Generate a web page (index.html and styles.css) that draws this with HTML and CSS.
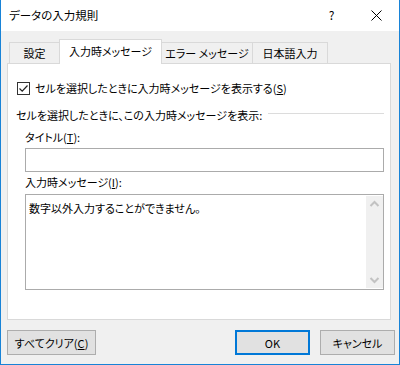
FILE: index.html
```html
<!DOCTYPE html>
<html lang="ja">
<head>
<meta charset="utf-8">
<title>データの入力規則</title>
<link rel="stylesheet" href="styles.css">
</head>
<body>
<div class="window">
  <div class="titlebar">
    <div class="title">データの入力規則</div>
    <div class="tb-btn help">?</div>
    <div class="tb-btn close">
      <svg width="11" height="11" viewBox="0 0 11 11"><path d="M0.5 0.5 L10.5 10.5 M10.5 0.5 L0.5 10.5" stroke="#000" stroke-width="1" fill="none"/></svg>
    </div>
  </div>
  <div class="body">
    <div class="tabs">
      <div class="tab t1">設定</div>
      <div class="tab active t2">入力時メッセージ</div>
      <div class="tab t3">エラー メッセージ</div>
      <div class="tab t4">日本語入力</div>
    </div>
    <div class="panel">
      <div class="check-row">
        <span class="checkbox">
          <svg width="11" height="11" viewBox="0 0 11 11"><path d="M1.5 5.5 L4.2 8.2 L9.5 2.5" stroke="#222" stroke-width="1.2" fill="none"/></svg>
        </span>
        <span>セルを選択したときに入力時メッセージを表示する(<u>S</u>)</span>
      </div>
      <div class="section-row">
        <span>セルを選択したときに、この入力時メッセージを表示:</span>
        <span class="sep"></span>
      </div>
      <div class="indent">
        <div class="label l1">タイトル(<u>T</u>):</div>
        <div class="input"></div>
        <div class="label l2">入力時メッセージ(<u>I</u>):</div>
        <div class="textarea">
          <div class="ta-text">数字以外入力することができません。</div>
          <div class="scrollbar">
            <svg width="17" height="17" viewBox="0 0 17 17"><path d="M4.5 10 L8.5 6 L12.5 10" stroke="#c2c2c2" stroke-width="2" fill="none"/></svg>
            <svg width="17" height="17" viewBox="0 0 17 17"><path d="M4.5 7 L8.5 11 L12.5 7" stroke="#c2c2c2" stroke-width="2" fill="none"/></svg>
          </div>
        </div>
      </div>
    </div>
    <div class="buttons">
      <div class="btn clear">すべてクリア(<u>C</u>)</div>
      <div class="spacer"></div>
      <div class="btn ok">OK</div>
      <div class="btn cancel">キャンセル</div>
    </div>
  </div>
</div>
</body>
</html>
```
FILE: styles.css
```css
html, body {
  margin: 0;
  padding: 0;
  background: #ffffff;
}
body {
  font-family: "Noto Sans CJK JP", "Noto Sans", sans-serif;
  font-size: 11px;
  font-feature-settings: "palt" 1;
  color: #000;
  line-height: 16px;
}
.window {
  width: 398px;
  height: 364px;
  border-left: 1px solid #1883d7;
  border-right: 1px solid #1883d7;
  border-bottom: 1px solid #1883d7;
  background: #f0f0f0;
  display: flex;
  flex-direction: column;
}
.titlebar {
  height: 31px;
  background: #ffffff;
  display: flex;
  align-items: center;
}
.title {
  flex: 1;
  padding-left: 8px;
  padding-bottom: 1px;
  font-size: 11.5px;
}
.tb-btn {
  width: 45px;
  height: 31px;
  display: flex;
  align-items: center;
  justify-content: center;
}
.help {
  font-size: 12px;
  padding-bottom: 1px;
  box-sizing: border-box;
}
.close svg { display: block; }

.body {
  padding: 8px 6px 0 6px;
  display: flex;
  flex-direction: column;
}
.tabs {
  display: flex;
  align-items: flex-end;
  height: 24px;
  padding-left: 2px;
}
.tab {
  box-sizing: border-box;
  height: 21px;
  border: 1px solid #d9d9d9;
  border-bottom: none;
  background: #f0f0f0;
  display: flex;
  align-items: center;
  justify-content: center;
  white-space: nowrap;
}
.t1 { width: 51px; }
.t2 { width: 103px; margin-left: -1px; }
.t3 { width: 92px; margin-left: -1px; }
.t4 { width: 76px; margin-left: -1px; }
.tab.active {
  height: 25px;
  margin-bottom: -1px;
  background: #ffffff;
  position: relative;
  z-index: 1;
  padding-bottom: 2px;
}
.panel {
  box-sizing: border-box;
  width: 384px;
  height: 257px;
  background: #ffffff;
  border: 1px solid #d9d9d9;
  padding: 16px 6px 0 8px;
  display: flex;
  flex-direction: column;
}
.check-row {
  display: flex;
  align-items: center;
  padding-left: 1px;
  height: 16px;
}
.checkbox {
  box-sizing: border-box;
  width: 13px;
  height: 13px;
  border: 1px solid #333333;
  background: #fff;
  margin-right: 5px;
  display: flex;
  align-items: center;
  justify-content: center;
}
.checkbox svg { display: block; }
.section-row {
  margin-top: 11px;
  display: flex;
  align-items: center;
  height: 16px;
  white-space: nowrap;
}
.sep {
  flex: 1;
  height: 1px;
  background: #dcdcdc;
  margin-left: 6px;
  margin-bottom: 3px;
}
.indent {
  padding-left: 9px;
  display: flex;
  flex-direction: column;
}
.label { height: 16px; }
.l1 { margin-top: 6px; }
.l2 { margin-top: 2px; }
.input {
  margin-top: 3px;
  box-sizing: border-box;
  height: 24px;
  border: 1px solid #ababab;
  background: #fff;
}
.textarea {
  margin-top: 4px;
  box-sizing: border-box;
  height: 96px;
  border: 1px solid #ababab;
  background: #fff;
  display: flex;
}
.ta-text {
  flex: 1;
  padding: 5px 0 0 3px;
}
.scrollbar {
  width: 17px;
  margin: 1px 0 1px 0;
  background: #f0f0f0;
  display: flex;
  flex-direction: column;
  justify-content: space-between;
}
.scrollbar svg { display: block; }
.buttons {
  margin-top: 10px;
  display: flex;
  height: 25px;
}
.btn {
  box-sizing: border-box;
  height: 25px;
  background: #e1e1e1;
  border: 1px solid #adadad;
  display: flex;
  align-items: center;
  justify-content: center;
  white-space: nowrap;
}
.clear { width: 89px; }
.spacer { flex: 1; }
.ok {
  width: 75px;
  border: 2px solid #0078d7;
}
.cancel {
  width: 75px;
  margin-left: 10px;
  margin-right: -2px;
}
```
